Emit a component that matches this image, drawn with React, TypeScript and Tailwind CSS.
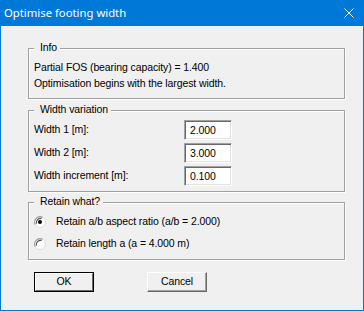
import React from 'react'

const font = { fontFamily: '"Liberation Sans", Arial, sans-serif' }

function Group({ title, children, className = '' }: { title: string; children: React.ReactNode; className?: string }) {
  return (
    <div className={`relative border border-[#a0a0a0] shadow-[1px_1px_0_#ffffff,inset_1px_1px_0_#ffffff] w-[317px] pl-[5px] ${className}`}>
      <span className="absolute left-[5px] -top-[8px] bg-[#f0f0f0] pl-[6px] pr-[3px] leading-[13px]">{title}</span>
      {children}
    </div>
  )
}

function Field({ label, value }: { label: string; value: string }) {
  return (
    <div className="flex items-center h-[20px]">
      <span className="w-[150px]">{label}</span>
      <div className="w-[48px] h-[20px] bg-white border border-t-[#a0a0a0] border-l-[#a0a0a0] border-r-white border-b-white shadow-[inset_1px_1px_0_#696969,inset_-1px_-1px_0_#e3e3e3] pl-[5px] leading-[18px]">
        {value}
      </div>
    </div>
  )
}

function Radio({ checked, label }: { checked?: boolean; label: string }) {
  return (
    <div className="flex items-center h-[16px]">
      <svg width="12" height="12" viewBox="0 0 12 12">
        <circle cx="6" cy="6" r="5.5" fill="#ffffff" stroke="#dcdcdc" />
        <path d="M1.2 8.5 A5.5 5.5 0 0 1 8.5 1.2" fill="none" stroke="#a0a0a0" strokeWidth="1.2" />
        <path d="M2.4 7.6 A4.4 4.4 0 0 1 7.6 2.4" fill="none" stroke="#555555" strokeWidth="1.2" />
        {checked && <circle cx="6" cy="6" r="2" fill="#000000" />}
      </svg>
      <span className="ml-[10px]">{label}</span>
    </div>
  )
}

function Button({ label, isDefault }: { label: string; isDefault?: boolean }) {
  if (isDefault) {
    return (
      <div className="w-[60px] h-[20px] border border-[#000000] bg-[#f0f0f0]">
        <div className="h-full border border-t-white border-l-white border-r-[#696969] border-b-[#696969] flex items-center justify-center">
          {label}
        </div>
      </div>
    )
  }
  return (
    <div className="w-[60px] h-[20px] border border-t-white border-l-white border-r-[#696969] border-b-[#696969] shadow-[inset_-1px_-1px_0_#a0a0a0] bg-[#f0f0f0] flex items-center justify-center">
      {label}
    </div>
  )
}

export default function App() {
  return (
    <div className="w-[364px] h-[311px] bg-[#f0f0f0] border-x border-b border-[#0078d7] text-[10.5px] tracking-[-0.1px] text-black" style={font}>
      <div className="h-[26px] bg-[#0078d7] flex items-center justify-between pl-[4px] pr-[10px] text-white -mx-px tracking-normal">
        <span className="text-[11.3px]" style={{ fontFamily: '"Segoe UI", "Noto Sans", sans-serif' }}>Optimise footing width</span>
        <svg width="10" height="10" viewBox="0 0 10 10">
          <path d="M0.5 0.5 L9.5 9.5 M9.5 0.5 L0.5 9.5" stroke="#ffffff" strokeWidth="1" />
        </svg>
      </div>
      <div className="pl-[27px] pt-[22px]">
        <Group title="Info" className="pt-[10px] pb-[7px]">
          <div className="leading-[16px]">Partial FOS (bearing capacity) = 1.400</div>
          <div className="leading-[16px]">Optimisation begins with the largest width.</div>
        </Group>
        <Group title="Width variation" className="mt-[11px] pt-[9px] pb-[5px]">
          <div className="flex flex-col gap-[3px]">
            <Field label="Width 1 [m]:" value="2.000" />
            <Field label="Width 2 [m]:" value="3.000" />
            <Field label="Width increment [m]:" value="0.100" />
          </div>
        </Group>
        <Group title="Retain what?" className="mt-[10px] pt-[11px] pb-[7px]">
          <div className="flex flex-col gap-[6px]">
            <Radio checked label="Retain a/b aspect ratio (a/b = 2.000)" />
            <Radio label="Retain length a (a = 4.000 m)" />
          </div>
        </Group>
        <div className="flex gap-[53px] ml-[6px] mt-[12px]">
          <Button isDefault label="OK" />
          <Button label="Cancel" />
        </div>
      </div>
    </div>
  )
}
